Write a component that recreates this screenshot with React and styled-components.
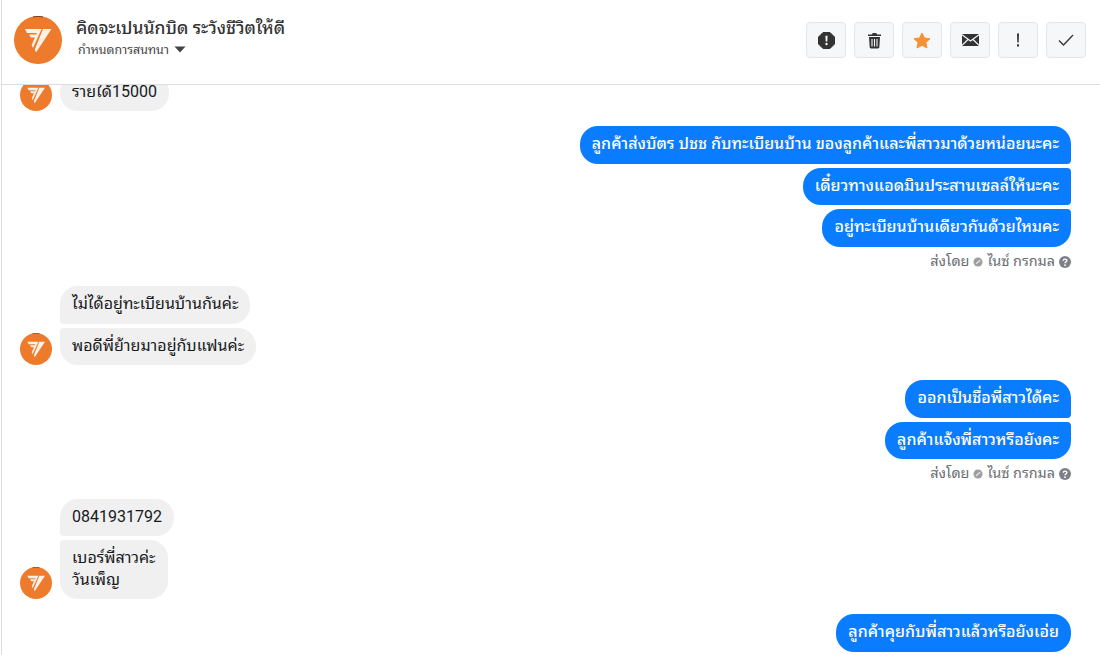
import React from "react";
import styled, { createGlobalStyle } from "styled-components";

const Global = createGlobalStyle`
  html, body { margin: 0; padding: 0; background: #fff; }
  body { font-family: Roboto, "Noto Sans Thai Looped", "Noto Sans", sans-serif; overflow: hidden; }
`;
const Page = styled.div`
  width: 1099px; height: 655px; display: flex; flex-direction: column;
  border-left: 1px solid #dadde1; margin-left: 1px; box-sizing: border-box; overflow: hidden; background: #fff;
`;
const Header = styled.header`
  height: 85px; flex: none; box-sizing: border-box; border-bottom: 1px solid #dadde1;
  display: flex; align-items: center; padding: 0 14px 4px 12px; background: #fff; position: relative; z-index: 1;
`;
const Who = styled.div`
  margin-left: 14px; display: flex; flex-direction: column; flex: 1; padding-bottom: 7px;
`;
const Name = styled.div`font-size: 17.5px; font-weight: 500; color: #333; line-height: 22px;`;
const Assign = styled.div`
  font-size: 12.4px; color: #444; line-height: 14px; margin-top: 4px; margin-left: 2px;
  display: flex; align-items: center; gap: 3px;
`;
const Tools = styled.div`display: flex; gap: 8px;`;
const Tool = styled.button`
  width: 40px; height: 36px; padding: 0; border: 1px solid #e4e6e9; border-radius: 4px; background: #f6f7f9;
  display: flex; align-items: center; justify-content: center;
`;
const Thread = styled.main`
  flex: 1; overflow: hidden; display: flex; flex-direction: column; padding: 0 29px 0 18px;
  margin-top: -11.5px;
`;
const Group = styled.section`
  display: flex; flex-direction: column; gap: 4px; flex: none;
  align-items: ${p => (p.$me ? "flex-end" : "flex-start")};
  margin-top: ${p => p.$gap || 0}px;
`;
const Row = styled.div`display: flex; align-items: flex-end; gap: 8px;`;
const AvatarSlot = styled.div`width: 32px; flex: none;`;
const Bubble = styled.div`
  box-sizing: border-box; font-size: 16px; line-height: 21.5px; padding: 7px 12px 9px;
  white-space: pre-line;
  background: ${p => (p.$me ? "#0a7cff" : "#f0f0f0")};
  color: ${p => (p.$me ? "#fff" : "#17191c")};
  font-weight: ${p => (p.$me ? 500 : 400)};
  border-radius: ${p => p.$radius};
`;
const Status = styled.div`
  font-size: 14.4px; line-height: 16px; color: #6a6d72; display: flex; align-items: center; gap: 4px; margin-top: 3px;
`;

const Logo = ({ size }) => (
  <svg width={size} height={size} viewBox="0 0 48 48" style={{ flex: "none", display: "block" }}>
    <circle cx="24" cy="24" r="24" fill="#ee7a2b" />
    <path d="M19 0.9A24 24 0 0 1 29 0.9" stroke="#6b3a18" strokeWidth="0.9" fill="none" />
    <path d="M11 13H25L23 17H13ZM15 18.5H22.5L21 21.5H17ZM24.8 13H27.6L19 32L17.6 29ZM29 13H37.5L22 36.5L20.8 33.5Z" fill="#fdf0e6" />
  </svg>
);
const Caret = () => (
  <svg width="12" height="7" viewBox="0 0 12 7" style={{ marginLeft: 2 }}><path d="M0.5 0.5H11.5L6 6.5Z" fill="#444" /></svg>
);
const Octagon = () => (
  <svg width="17" height="17" viewBox="0 0 17 17"><path d="M5 0.5H12L16.5 5V12L12 16.5H5L0.5 12V5Z" fill="#333" stroke="#333" strokeLinejoin="round" /><path d="M7.4 3.8H9.6L9.3 9.6H7.7Z" fill="#f6f7f9" /><circle cx="8.5" cy="12" r="1.2" fill="#f6f7f9" /></svg>
);
const Trash = () => (
  <svg width="15" height="17" viewBox="0 0 15 17"><path d="M1 2.5H5L5.7 1H9.3L10 2.5H14V4H1Z" fill="#333" /><path d="M2 5H13L12.3 15.3C12.3 16 11.7 16.5 11 16.5H4C3.3 16.5 2.7 16 2.7 15.3Z" fill="#333" /><path d="M5 7V14.5M7.5 7V14.5M10 7V14.5" stroke="#f6f7f9" strokeWidth="1.1" /></svg>
);
const Star = () => (
  <svg width="18" height="17" viewBox="0 0 18 17"><path d="M9 1L11.4 6L17 6.7L12.9 10.5L14 16L9 13.3L4 16L5.1 10.5L1 6.7L6.6 6Z" fill="#f79131" stroke="#f79131" strokeLinejoin="round" /></svg>
);
const Mail = () => (
  <svg width="17" height="12" viewBox="0 0 17 12"><rect width="17" height="12" rx="1" fill="#333" /><path d="M0 0.7L8.5 7L17 0.7M0 11.3L6 5.5M17 11.3L11 5.5" stroke="#f6f7f9" strokeWidth="1.2" fill="none" /></svg>
);
const Bang = () => (
  <svg width="4" height="14" viewBox="0 0 4 14"><path d="M1 0.5H3L2.7 9.5H1.3Z" fill="#333" /><rect x="1" y="11.3" width="2" height="2.2" fill="#333" /></svg>
);
const Check = () => (
  <svg width="16" height="12" viewBox="0 0 16 12"><path d="M1 6.5L5.5 11L15 1" stroke="#333" strokeWidth="1.3" fill="none" /></svg>
);
const Sent = () => (
  <svg width="10" height="10" viewBox="0 0 10 10"><circle cx="5" cy="5" r="4.5" fill="#9c9ea2" /><path d="M3 6.8L7.2 3.2" stroke="#e8e8e8" strokeWidth="1.2" fill="none" /></svg>
);
const Help = () => (
  <svg width="12" height="12" viewBox="0 0 12 12"><circle cx="6" cy="6" r="6" fill="#7d8085" /><path d="M4.2 4.7C4.2 2.5 7.9 2.5 7.9 4.6C7.9 5.9 6 5.9 6 7.2" stroke="#fff" strokeWidth="1.3" fill="none" /><circle cx="6" cy="9.2" r="0.9" fill="#fff" /></svg>
);

const R = 18, S = 4;
const meRadius = (i, n) => `${R}px ${i === 0 ? R : S}px ${i === n - 1 ? R : S}px ${R}px`;
const themRadius = (i, n) => `${i === 0 ? R : S}px ${R}px ${R}px ${i === n - 1 ? R : S}px`;

const Me = ({ gap, items, status }) => (
  <Group $me $gap={gap}>
    {items.map((t, i) => <Bubble key={t} $me $radius={meRadius(i, items.length)}>{t}</Bubble>)}
    {status && (
      <Status>ส่งโดย <Sent /> ไนซ์ กรกมล <Help /></Status>
    )}
  </Group>
);
const Them = ({ gap, items }) => (
  <Group $gap={gap}>
    {items.map((t, i) => (
      <Row key={t}>
        {i === items.length - 1 ? <Logo size={32} /> : <AvatarSlot />}
        <Bubble $radius={themRadius(i, items.length)}>{t}</Bubble>
      </Row>
    ))}
  </Group>
);

export default function App() {
  return (
    <Page>
      <Global />
      <Header>
        <Logo size={48} />
        <Who>
          <Name>คิดจะเปนนักบิด ระวังชีวิตให้ดี</Name>
          <Assign>กำหนดการสนทนา <Caret /></Assign>
        </Who>
        <Tools>
          <Tool><Octagon /></Tool>
          <Tool><Trash /></Tool>
          <Tool><Star /></Tool>
          <Tool><Mail /></Tool>
          <Tool><Bang /></Tool>
          <Tool><Check /></Tool>
        </Tools>
      </Header>
      <Thread>
        <Them items={["รายได้15000"]} />
        <Me gap={15} items={["ลูกค้าส่งบัตร ปชช กับทะเบียนบ้าน ของลูกค้าและพี่สาวมาด้วยหน่อยนะคะ", "เดี๋ยวทางแอดมินประสานเซลล์ให้นะคะ", "อยู่ทะเบียนบ้านเดียวกันด้วยไหมคะ"]} status />
        <Them gap={16.5} items={["ไม่ได้อยู่ทะเบียนบ้านกันค่ะ", "พอดีพี่ย้ายมาอยู่กับแฟนค่ะ"]} />
        <Me gap={15} items={["ออกเป็นชื่อพี่สาวได้คะ", "ลูกค้าแจ้งพี่สาวหรือยังคะ"]} status />
        <Them gap={16.5} items={["0841931792", "เบอร์พี่สาวค่ะ\nวันเพ็ญ"]} />
        <Me gap={15} items={["ลูกค้าคุยกับพี่สาวแล้วหรือยังเอ่ย"]} />
      </Thread>
    </Page>
  );
}
